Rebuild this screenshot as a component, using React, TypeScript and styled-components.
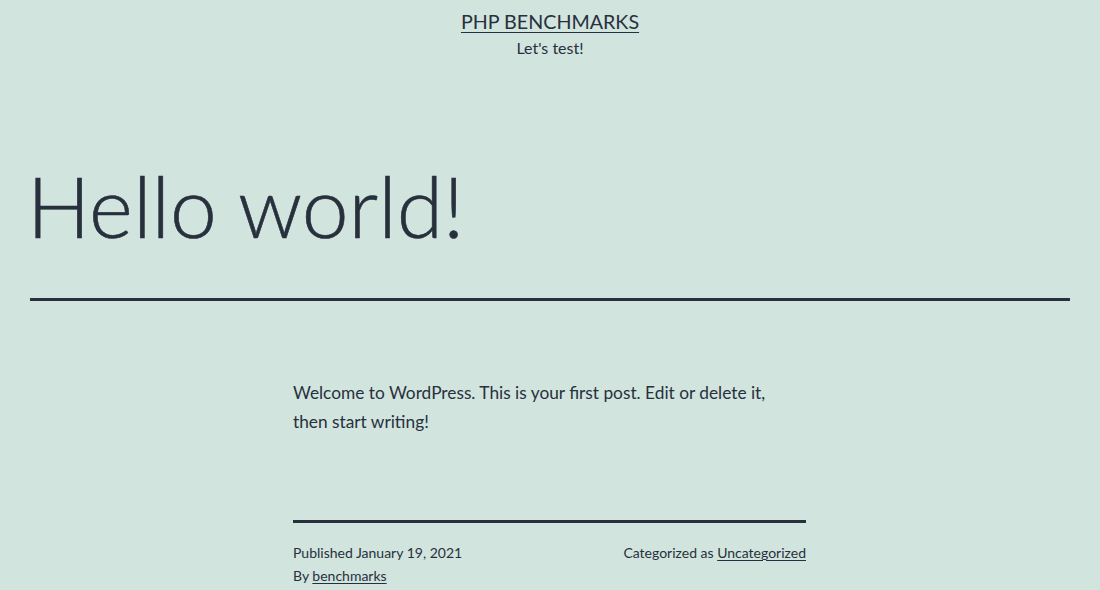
import React from 'react';
import styled, { createGlobalStyle } from 'styled-components';

const GlobalStyle = createGlobalStyle`
  html, body {
    margin: 0;
    padding: 0;
    background: #d1e4dd;
    color: #28303d;
    font-family: Lato, "Noto Sans", sans-serif;
  }
`;

const Page = styled.div`
  width: 1100px;
  height: 590px;
  overflow: hidden;
`;

const Header = styled.header`
  display: flex;
  flex-direction: column;
  align-items: center;
  padding-top: 10px;
`;

const SiteTitle = styled.a`
  font-size: 19.7px;
  line-height: 24px;
  color: #28303d;
  text-decoration: underline;
  text-decoration-thickness: 1px;
  text-underline-offset: 3px;
`;

const Tagline = styled.p`
  margin: 3px 0 0;
  font-size: 16px;
  line-height: 22px;
`;

const EntryTitle = styled.h1`
  margin: 105px 30px 0 27px;
  font-size: 84px;
  font-weight: 300;
  line-height: 1;
  -webkit-text-stroke: 0.6px #28303d;
`;

const Rule = styled.hr<{ $wide?: boolean }>`
  border: 0;
  border-top: 3px solid #28303d;
  margin: ${(p) => (p.$wide ? '50px 30px 0' : '0')};
`;

const Content = styled.div`
  width: 513px;
  margin: 0 0 0 293px;
`;

const Paragraph = styled.p`
  margin: 77px 0 0;
  font-size: 17.3px;
  line-height: 29px;
`;

const EntryFooter = styled.footer`
  margin-top: 84px;
`;

const Meta = styled.div`
  display: flex;
  justify-content: space-between;
  padding-top: 18px;
  font-size: 14px;
  line-height: 23px;
`;

const MetaLink = styled.a`
  color: #28303d;
  text-decoration: underline;
  text-decoration-thickness: 1px;
  text-underline-offset: 2px;
`;

export default function App() {
  return (
    <Page>
      <GlobalStyle />
      <Header>
        <SiteTitle href="#">PHP BENCHMARKS</SiteTitle>
        <Tagline>Let's test!</Tagline>
      </Header>
      <EntryTitle>Hello world!</EntryTitle>
      <Rule $wide />
      <Content>
        <Paragraph>
          Welcome to WordPress. This is your first post. Edit or delete it,
          <br />
          then start writing!
        </Paragraph>
        <EntryFooter>
          <Rule />
          <Meta>
            <div>
              <div>Published January 19, 2021</div>
              <div>
                By <MetaLink href="#">benchmarks</MetaLink>
              </div>
            </div>
            <div>
              Categorized as <MetaLink href="#">Uncategorized</MetaLink>
            </div>
          </Meta>
        </EntryFooter>
      </Content>
    </Page>
  );
}
